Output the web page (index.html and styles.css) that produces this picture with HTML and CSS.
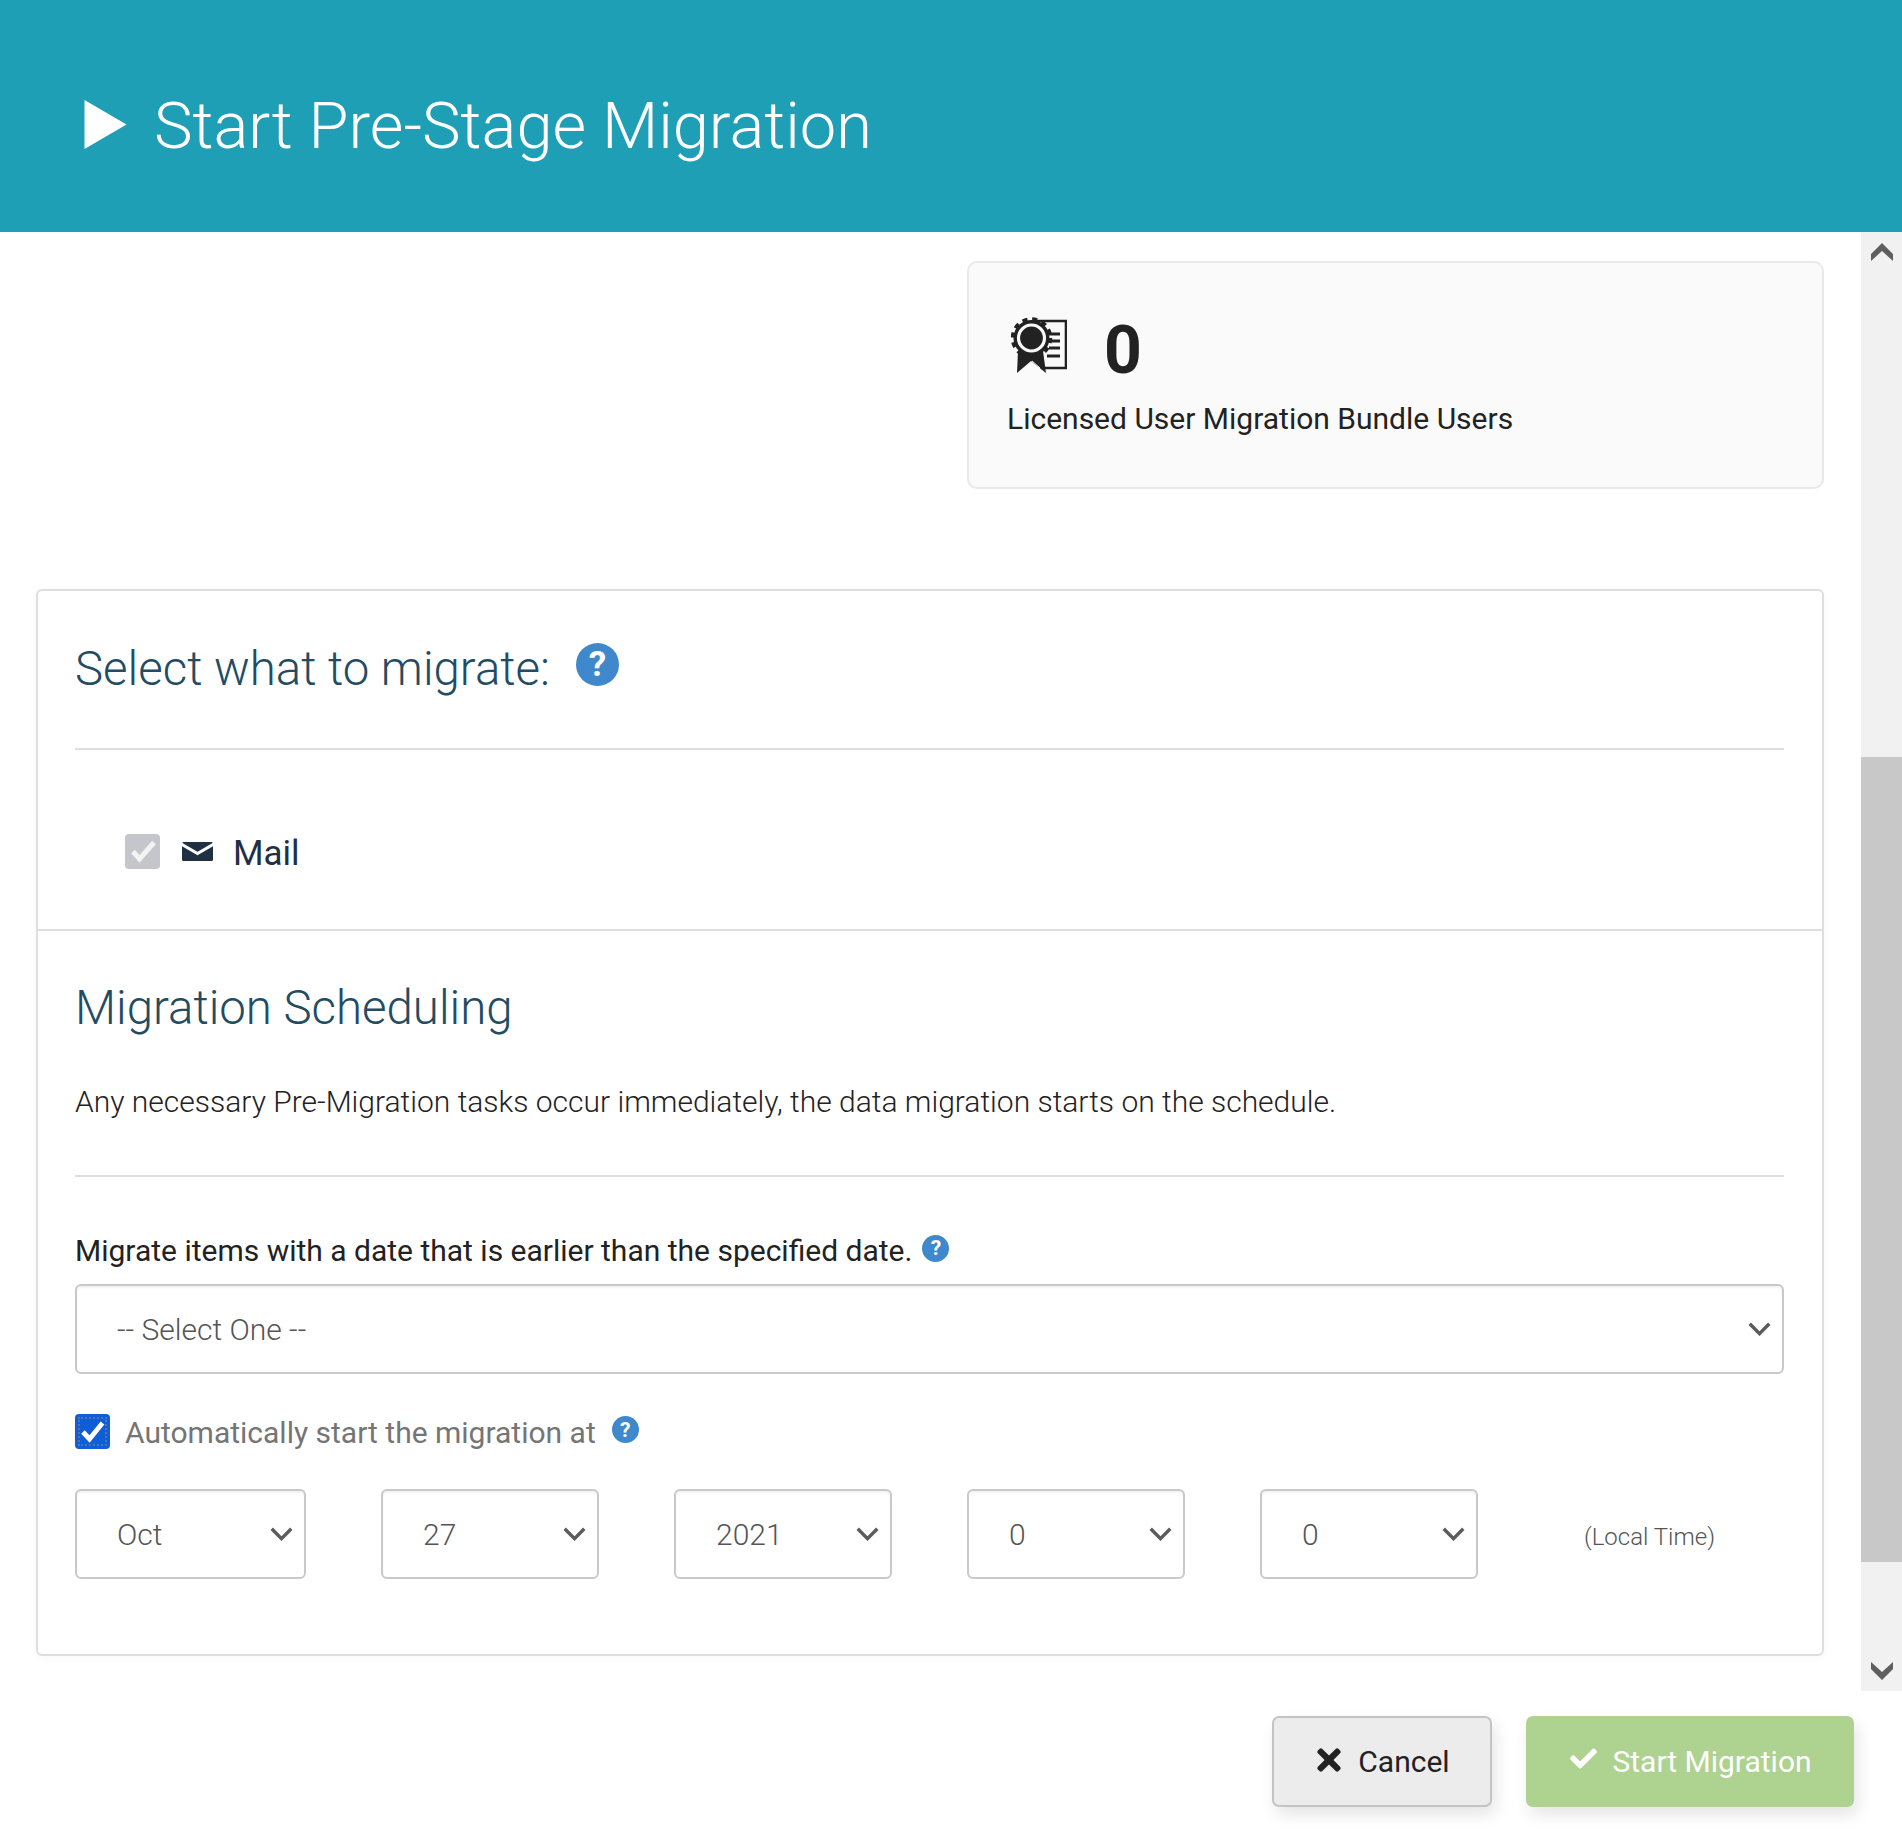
FILE: index.html
```html
<!DOCTYPE html>
<html lang="en">
<head>
<meta charset="utf-8">
<title>Start Pre-Stage Migration</title>
<link rel="stylesheet" href="styles.css">
</head>
<body>
<header class="header">
  <svg class="play" viewBox="0 0 42 49"><path d="M0 0 42 24.5 0 49Z" fill="#fff"/></svg>
  <h1 class="title">Start Pre-Stage Migration</h1>
</header>
<div class="middle">
  <main class="content">
    <div class="top-row">
      <section class="stat-card">
        <div class="stat-line">
          <svg class="cert" viewBox="0 0 56 56">
            <path d="M24 4H55V51H30" fill="none" stroke="#222" stroke-width="2.6"/>
            <path d="M37 17H49M40 24H49M38 31H49M36 39H49" stroke="#222" stroke-width="3" fill="none"/>
            <path d="M7 34 6 56 20 44 35 56 32 34Z" fill="#222"/>
            <path d="M21 44 29 51" stroke="#fafafa" stroke-width="1" fill="none"/>
            <circle cx="20.5" cy="21" r="18.500" fill="none" stroke="#222" stroke-width="4.500" stroke-dasharray="5 4.700"/>
            <circle cx="20.5" cy="21" r="18" fill="#222"/>
            <circle cx="20.5" cy="21" r="13" fill="none" stroke="#fafafa" stroke-width="3.200"/>
          </svg>
          <span class="stat-num">0</span>
        </div>
        <div class="stat-label">Licensed User Migration Bundle Users</div>
      </section>
    </div>
    <section class="panel">
      <div class="sec sec-what">
        <div class="heading-row">
          <h2 class="heading">Select what to migrate:</h2>
          <span class="help help-lg">?</span>
        </div>
        <hr class="rule">
        <div class="mail-row">
          <span class="check check-off">
            <svg viewBox="0 0 35 35"><path d="M8 17.500 14.500 25 29 8.500" fill="none" stroke="#f3f3f4" stroke-width="5"/></svg>
          </span>
          <svg class="mail-icon" viewBox="0 0 31 19"><rect width="31" height="19" rx="1.500" fill="#1f3044"/><path d="M-1 2 15.500 11.500 32 2" fill="none" stroke="#fff" stroke-width="3"/></svg>
          <span class="mail-text">Mail</span>
        </div>
      </div>
      <div class="sec sec-sched">
        <h2 class="heading">Migration Scheduling</h2>
        <p class="para">Any necessary Pre-Migration tasks occur immediately, the data migration starts on the schedule.</p>
        <hr class="rule rule-sched">
        <div class="label-row">
          <span class="label">Migrate items with a date that is earlier than the specified date.</span>
          <span class="help help-sm">?</span>
        </div>
        <div class="select select-wide">
          <span>-- Select One --</span>
          <svg class="chev" viewBox="0 0 20 12"><path d="M1.500 1.500 10 10 18.500 1.500" fill="none" stroke="#5c5c5c" stroke-width="3"/></svg>
        </div>
        <div class="auto-row">
          <span class="check check-on">
            <svg viewBox="0 0 35 35"><path d="M8 18 14.500 25 27.500 9" fill="none" stroke="#fff" stroke-width="4.800"/></svg>
          </span>
          <span class="auto-text">Automatically start the migration at</span>
          <span class="help help-sm help-auto">?</span>
        </div>
        <div class="date-row">
          <div class="select select-month"><span>Oct</span><svg class="chev" viewBox="0 0 20 12"><path d="M1.500 1.500 10 10 18.500 1.500" fill="none" stroke="#5c5c5c" stroke-width="3"/></svg></div>
          <div class="select select-part"><span>27</span><svg class="chev" viewBox="0 0 20 12"><path d="M1.500 1.500 10 10 18.500 1.500" fill="none" stroke="#5c5c5c" stroke-width="3"/></svg></div>
          <div class="select select-part"><span>2021</span><svg class="chev" viewBox="0 0 20 12"><path d="M1.500 1.500 10 10 18.500 1.500" fill="none" stroke="#5c5c5c" stroke-width="3"/></svg></div>
          <div class="select select-part"><span>0</span><svg class="chev" viewBox="0 0 20 12"><path d="M1.500 1.500 10 10 18.500 1.500" fill="none" stroke="#5c5c5c" stroke-width="3"/></svg></div>
          <div class="select select-part"><span>0</span><svg class="chev" viewBox="0 0 20 12"><path d="M1.500 1.500 10 10 18.500 1.500" fill="none" stroke="#5c5c5c" stroke-width="3"/></svg></div>
          <span class="local">(Local Time)</span>
        </div>
      </div>
    </section>
  </main>
  <div class="scrollbar">
    <div class="scroll-arrow"><svg viewBox="0 0 22 18"><path d="M0 11 11 0 22 11V18L11 8 0 18Z" fill="#5f5f5f"/></svg></div>
    <div class="thumb"></div>
    <div class="scroll-arrow scroll-arrow-down"><svg viewBox="0 0 22 18"><path d="M0 0 11 10 22 0V7L11 18 0 7Z" fill="#5f5f5f"/></svg></div>
  </div>
</div>
<footer class="footer">
  <div class="btn btn-cancel">
    <svg class="btn-x" viewBox="0 0 352 512"><path d="M242.72 256l100.07-100.07c12.28-12.28 12.28-32.19 0-44.48l-22.24-22.24c-12.28-12.28-32.19-12.28-44.48 0L176 189.28 75.93 89.21c-12.28-12.28-32.19-12.28-44.48 0L9.21 111.45c-12.28 12.28-12.28 32.19 0 44.48L109.28 256 9.21 356.07c-12.28 12.28-12.28 32.19 0 44.48l22.24 22.24c12.28 12.28 32.2 12.28 44.48 0L176 322.72l100.07 100.07c12.28 12.28 32.2 12.28 44.48 0l22.24-22.24c12.28-12.28 12.28-32.19 0-44.48L242.72 256z" fill="#222"/></svg>
    <span>Cancel</span>
  </div>
  <div class="btn btn-start">
    <svg class="btn-check" viewBox="0 0 512 512"><path d="M173.898 439.404l-166.4-166.4c-9.997-9.997-9.997-26.206 0-36.204l36.203-36.204c9.997-9.998 26.207-9.998 36.204 0L192 312.69 432.095 72.596c9.997-9.997 26.207-9.997 36.204 0l36.203 36.204c9.997 9.997 9.997 26.206 0 36.204l-294.4 294.401c-9.998 9.997-26.207 9.997-36.204-.001z" fill="#fff"/></svg>
    <span>Start Migration</span>
  </div>
</footer>
</body>
</html>
```

FILE: styles.css
```css
* { box-sizing: border-box; }
html, body { margin: 0; padding: 0; }
body {
  width: 1902px;
  height: 1833px;
  overflow: hidden;
  background: #fff;
  font-family: Roboto, "Liberation Sans", sans-serif;
  color: #222;
  display: flex;
  flex-direction: column;
}
.header {
  height: 232px;
  flex: none;
  background: #1f9fb6;
  display: flex;
  align-items: center;
  padding: 16px 0 0 84px;
}
.play { width: 43px; height: 49px; flex: none; }
.title {
  margin: 4px 0 0 27px;
  font-weight: 300;
  font-size: 65px;
  line-height: 80px;
  color: #fff;
}
.middle { flex: none; height: 1459px; display: flex; }
.content { flex: 1; min-width: 0; padding: 29px 37px 0 36px; }
.top-row { display: flex; justify-content: flex-end; }
.stat-card {
  width: 857px;
  height: 228px;
  background: #fafafa;
  border: 2px solid #e9e9e9;
  border-radius: 10px;
  padding: 53px 0 0 38px;
}
.stat-line { display: flex; align-items: center; height: 58px; }
.cert { width: 56px; height: 56px; margin-left: 4px; flex: none; }
.stat-num { margin: 12px 0 0 37px; font-weight: 700; font-size: 66px; line-height: 58px; color: #222; }
.stat-label { margin-top: 25px; font-size: 30px; line-height: 40px; color: #222; }
.panel {
  margin-top: 100px;
  border: 2px solid #dedede;
  border-radius: 6px;
  background: #fff;
  box-shadow: 0 2px 8px rgba(0,0,0,.03);
}
.sec { padding: 0 38px 0 37px; }
.sec-what { padding-top: 48px; padding-bottom: 56px; border-bottom: 2px solid #dedede; }
.sec-sched { padding-top: 47px; padding-bottom: 75px; }
.heading-row { display: flex; align-items: center; height: 60px; margin-bottom: 49px; }
.heading { margin: 0; font-weight: 300; font-size: 47.400px; line-height: 60px; color: #234c63; }
.rule { margin: 0; height: 2px; border: 0; background: #dedede; }
.help {
  display: inline-flex;
  align-items: center;
  justify-content: center;
  border-radius: 50%;
  background: #3f88cb;
  color: #fff;
  font-weight: 700;
  flex: none;
}
.help-lg { width: 43px; height: 43px; font-size: 35px; margin: -10px 0 0 26px; }
.help-sm { width: 27px; height: 27px; font-size: 21px; margin: -6px 0 0 10px; }
.help-auto { margin-left: 16px; margin-top: -4px; }
.mail-row { display: flex; align-items: center; height: 40px; margin-top: 83px; padding-left: 50px; }
.check {
  width: 35px;
  height: 35px;
  border-radius: 4px;
  flex: none;
  display: block;
}
.check svg { display: block; width: 35px; height: 35px; }
.check-off { background: #c5c6cb; margin-top: -3px; }
.check-on { background: #0f5ed7; outline: 2px dotted #4f76ab; outline-offset: -5px; }
.mail-icon { width: 31px; height: 19px; margin: -4px 0 0 22px; flex: none; }
.mail-text { margin: 2px 0 0 20px; font-size: 35px; line-height: 40px; color: #1f3044; }
.para { margin: 44px 0 0; font-weight: 300; font-size: 30px; line-height: 40px; color: #222; }
.rule-sched { margin-top: 53px; }
.label-row { display: flex; align-items: center; height: 40px; margin-top: 54px; }
.label { font-size: 30px; line-height: 40px; color: #222; }
.select {
  height: 90px;
  border: 2px solid #c9c9c9;
  border-radius: 6px;
  background: #fff;
  display: flex;
  align-items: center;
  justify-content: space-between;
  padding: 0 11px 0 40px;
  font-weight: 300;
  font-size: 30px;
  color: #555;
  box-shadow: inset 0 2px 2px rgba(0,0,0,.05);
}
.select-wide { margin-top: 13px; }
.chev { width: 23px; height: 14px; flex: none; }
.auto-row { display: flex; align-items: center; height: 35px; margin-top: 40px; }
.auto-text { margin: 2px 0 0 15px; font-size: 30px; line-height: 40px; color: #757575; }
.date-row { display: flex; align-items: center; gap: 75px; margin-top: 40px; }
.select-month { width: 231px; flex: none; }
.select-part { width: 218px; flex: none; }
.local { margin: 6px 0 0 31px; font-weight: 300; font-size: 24px; color: #555; }
.scrollbar {
  width: 41px;
  flex: none;
  background: #f1f1f1;
  display: flex;
  flex-direction: column;
}
.scroll-arrow { height: 41px; flex: none; display: flex; align-items: center; justify-content: center; padding-bottom: 2px; }
.scroll-arrow svg { width: 22px; height: 18px; display: block; }
.thumb { height: 805px; margin-top: 484px; background: #c8c8c8; flex: none; }
.scroll-arrow-down { margin-top: auto; padding-bottom: 0; }
.footer {
  flex: none;
  height: 142px;
  display: flex;
  justify-content: flex-end;
  gap: 34px;
  padding: 25px 48px 0 0;
}
.btn {
  height: 91px;
  border-radius: 7px;
  display: flex;
  align-items: center;
  justify-content: center;
  font-size: 30px;
  box-shadow: 4px 8px 16px rgba(0,0,0,.1);
}
.btn-cancel { width: 220px; background: #ececec; border: 2px solid #c4c4c4; color: #222; padding-left: 3px; }
.btn-start { width: 328px; background: #aed28f; color: #fff; padding-left: 2px; }
.btn-x { width: 24px; height: 34px; margin: -4px 17px 0 0; flex: none; }
.btn-check { width: 27px; height: 27px; margin: -6px 15px 0 0; flex: none; }
```
